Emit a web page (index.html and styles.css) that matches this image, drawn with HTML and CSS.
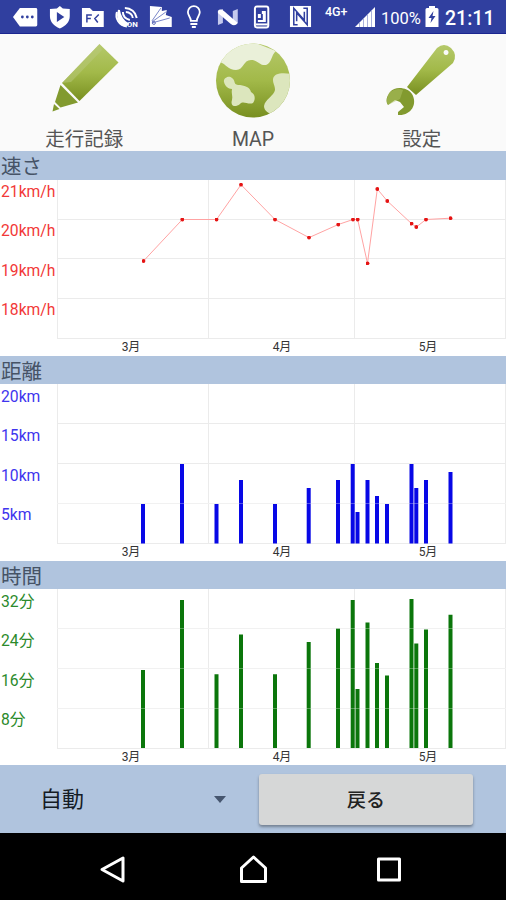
FILE: index.html
```
<!DOCTYPE html>
<html lang="ja">
<head>
    <meta charset="UTF-8">
    <meta name="viewport" content="width=device-width, initial-scale=1.0">
    <title>走行記録</title>
    <link rel="stylesheet" href="styles.css">
</head>
<body>
    <div class="status">
        <div class="notifications">
            <svg viewBox="0 0 34 34"><path fill="#fff" d="M4 17L11 8H27Q28.500 8 28.500 9.500V25Q28.500 26.500 27 26.500H11Z"/><g fill="#303f9f"><circle cx="13.500" cy="17" r="1.400"/><circle cx="18.500" cy="17" r="1.400"/><circle cx="23.500" cy="17" r="1.400"/></g></svg>
            <svg viewBox="0 0 34 34"><path fill="#fff" d="M17 6L20 8.500L27 9V16C27 22 23 26 17 28.500C11 26 7 22 7 16V9L14 8.500Z"/><path fill="#303f9f" d="M14 12L21.500 17L14 22Z"/></svg>
            <svg viewBox="0 0 34 34"><path fill="#fff" d="M6 8H14L17 11H28V27H6Z"/><path fill="none" stroke="#303f9f" stroke-width="1.500" d="M11 22.500V15H16M11 18.500H15M23 14.500L19 18.500L22 22.500"/></svg>
            <svg viewBox="0 0 34 34"><g fill="none" stroke="#fff" stroke-width="2"><path d="M7 12C5 18 9 26 17 26.500"/><path d="M9 10C10 16 13 21 18 24L15 26C9 23 7 16 9 10Z" fill="#fff"/><path d="M13 12C13 16 16 19 20 20M15 8C21 8 26 12 27 18M16 12C20 12 23 15 23 18"/></g><text x="17" y="27" class="tiny">ON</text></svg>
            <svg viewBox="0 0 34 34"><path fill="#fff" d="M6 6L18 7V11L23 10L22 15L28 17V27H6Z"/><path fill="none" stroke="#7885c8" d="M8 21L17 8M8 22L22 12M8 23L26 18"/><circle cx="10" cy="23" r="1.500" fill="none" stroke="#6572bb"/></svg>
            <svg viewBox="0 0 34 34"><path fill="none" stroke="#fff" stroke-width="1.800" d="M14 21C14 17 11 16 11 12A6 6 0 0 1 23 12C23 16 20 17 20 21Z"/><path stroke="#fff" stroke-width="2" d="M13.500 24H20.500M15 27H19"/></svg>
            <svg viewBox="0 0 34 34"><path fill="#c5caed" d="M7 11L12 9V23L7 25ZM22 11L27 9V23L22 25Z"/><path fill="#fff" d="M7 11Q9 8 13 11L27 23Q24 27 20 24L7 13Z"/></svg>
            <svg viewBox="0 0 34 34"><rect x="10" y="6.500" width="13.500" height="21" rx="2" fill="none" stroke="#fff" stroke-width="2"/><path fill="#fff" d="M13 14H16V18H13ZM17 11H21V22H13V20H18V14H17Z"/><path stroke="#fff" stroke-width="2" d="M11 24.500H23"/></svg>
        </div>
        <svg class="nfc" viewBox="0 0 24 24"><path fill="#fff" d="M1 1H23V23H1Z"/><path fill="none" stroke="#303f9f" stroke-width="1.600" d="M9 20.500H5V3.500L16 16V7M15 3.500H19V20.500L8 8V17"/></svg>
        <span class="network">4G+</span>
        <svg class="signal" viewBox="0 0 20 20"><path fill="#fff" d="M0 20L20 0V20Z"/><path stroke="#a9b1dc" d="M4.500 16V20M8.500 12V20M12.500 8V20M16.500 4V20"/></svg>
        <span class="percent">100%</span>
        <svg class="battery" viewBox="0 0 14 21"><path fill="#fff" d="M4 0H10V2H12Q13.500 2 13.500 3.500V21H.500V3.500Q.500 2 2 2H4Z"/><path fill="#303f9f" d="M8.500 5L3.500 12H6.500L5.500 17L10.500 10H7.500Z"/></svg>
        <span class="clock">21:11</span>
    </div>

    <div class="menu">
        <div class="menu-item">
            <svg width="76" height="76" viewBox="0 0 76 76">
                <defs><linearGradient id="green" x1="0" y1="0" x2="0" y2="1"><stop offset="0" stop-color="#b5c96a"/><stop offset=".5" stop-color="#a2b949"/><stop offset="1" stop-color="#788f20"/></linearGradient></defs>
                <path fill="url(#green)" d="M53.500 2L72.500 20.500L33.500 59L16 41Z"/>
                <path fill="#829a2f" d="M14.500 43L32 60.500L14.500 65.500L9 60ZM8 62L13.500 67L6.500 69.500Z"/>
                <path fill="#b9ca7e" opacity=".5" d="M53.500 2L56 8L25 40L16 41Z"/>
            </svg>
            <span>走行記録</span>
        </div>
        <div class="menu-item">
            <svg width="76" height="76" viewBox="0 0 76 76">
                <defs><clipPath id="globe"><circle cx="38" cy="38.500" r="37"/></clipPath></defs>
                <circle cx="38" cy="38.500" r="37" fill="url(#green)"/>
                <g clip-path="url(#globe)" fill="#dce6bd">
                    <path fill="#eaf0d9" d="M5 20C11 22 13 28 21 28C29 28 28 18 36 18C43 18 45 24 51 23C57 21 56 13 61 9L38 0H12Z"/>
                    <path d="M9 40C8 36 14 33 17 36C21 39 18 42 23 43C29 43 35 45 36 50C40 52 41 57 38 61C33 63 28 58 25 62C20 66 15 64 17 58C18 54 16 51 17 47C13 47 10 44 9 40Z"/>
                    <path d="M76 32C70 31 58 30 58 38C58 42 60 43 60 48C59 54 50 57 49 64C49 69 54 72 60 73L76 60Z"/>
                </g>
            </svg>
            <span>MAP</span>
        </div>
        <div class="menu-item">
            <svg width="76" height="76" viewBox="0 0 76 76">
                <path fill="url(#green)" fill-rule="evenodd" d="M53 6Q60 0 67 6Q74 13 69 21L32 53L23 45ZM62 8A2.500 2.500 0 1 0 62.100 8Z"/>
                <path fill="#829a2f" d="M6 50C11 44 23 45 28 52C34 62 27 74 14 73L14 70L20 65L16 60L11 58L4 63C1 59 3 54 6 50Z"/>
                <path fill="#afc465" opacity=".5" d="M6 50Q13 45 19 48L16 57L4 63Q1 57 6 50Z"/>
            </svg>
            <span>設定</span>
        </div>
    </div>

    <h2 class="first">速さ</h2>
    <div class="chart speed">
        <div class="labels"><span>21km/h</span><span>20km/h</span><span>19km/h</span><span>18km/h</span></div>
        <svg class="plot" viewBox="57 0 449 176">
            <defs><marker id="dot" markerWidth="4" markerHeight="4" refX="2" refY="2" markerUnits="userSpaceOnUse"><circle cx="2" cy="2" r="1.900" fill="#e51414"/></marker></defs>
            <path class="grid" d="M57 39.500H506M57 78.500H506M57 118.500H506M57 158.500H506M57.500 0V159M208.500 0V159M354.500 0V159M505.500 0V159"/>
            <polyline class="line" points="143.500,81 182.300,39.500 216.500,39.500 241,4.700 275,39.500 309,57.600 338.300,44.500 353,39.500 357.700,39.500 367.500,83.300 377.300,9 387.300,21 411.500,43.600 416.300,47 426,39.500 450.500,38.200"/>
            <text x="131" y="171">3月</text><text x="282" y="171">4月</text><text x="428" y="171">5月</text>
        </svg>
    </div>

    <h2>距離</h2>
    <div class="chart distance">
        <div class="labels"><span>20km</span><span>15km</span><span>10km</span><span>5km</span></div>
        <svg class="plot" viewBox="57 0 449 176">
            <path class="grid" d="M57 39.500H506M57 79.500H506M57 119.500H506M57 159.500H506M57.500 0V159M208.500 0V159M354.500 0V159M505.500 0V159"/>
            <path class="bars" d="M143 159.500V120M182 159.500V80M216.500 159.500V120M241 159.500V96M275 159.500V120M308.700 159.500V104M338 159.500V96M352.700 159.500V80M357.500 159.500V128M367.500 159.500V96M377 159.500V112M387 159.500V120M411.500 159.500V80M416.300 159.500V104M426 159.500V96M450.500 159.500V88"/>
            <path class="grid over" d="M57 119.500H506"/>
            <text x="131" y="172">3月</text><text x="282" y="172">4月</text><text x="428" y="172">5月</text>
        </svg>
    </div>

    <h2>時間</h2>
    <div class="chart time">
        <div class="labels"><span>32分</span><span>24分</span><span>16分</span><span>8分</span></div>
        <svg class="plot" viewBox="57 0 449 176">
            <path class="grid" d="M57 39.500H506M57 79.500H506M57 119.500H506M57 159.500H506M57.500 0V159M208.500 0V159M354.500 0V159M505.500 0V159"/>
            <path class="bars" d="M143 159V81M182 159V11M216.500 159V85.300M241 159V45.500M275 159V85.300M308.700 159V53M338 159V39.500M352.700 159V11M357.500 159V100M367.500 159V33.500M377 159V74M387 159V86.500M411.500 159V10M416.300 159V54.500M426 159V40.500M450.500 159V25.700"/>
            <path class="grid over" d="M57 39.500H506M57 79.500H506M57 119.500H506"/>
            <text x="131" y="171.500">3月</text><text x="282" y="171.500">4月</text><text x="428" y="171.500">5月</text>
        </svg>
    </div>

    <div class="footer">
        <div class="select"><span>自動</span><span class="arrow"></span></div>
        <button class="back">戻る</button>
    </div>

    <div class="navbar">
        <svg width="28" height="30" viewBox="0 0 28 30"><path d="M24 3V26L3 14.500Z"/></svg>
        <svg width="32" height="30" viewBox="0 0 32 30"><path d="M6.500 26.500V13L18.500 2L30.500 13V26.500Z"/></svg>
        <svg width="28" height="30" viewBox="0 0 28 30"><path d="M3.500 4H24.500V25H3.500Z"/></svg>
    </div>
</body>
</html>
```
FILE: styles.css
```
* {
    box-sizing: border-box;
}
body {
    margin: 0;
    width: 506px;
    height: 900px;
    overflow: hidden;
    display: flex;
    flex-direction: column;
    background-color: #fafafa;
    font-family: Roboto, "Noto Sans CJK JP", sans-serif;
}
.status {
    display: flex;
    align-items: center;
    height: 34px;
    padding-left: 9px;
    background-color: #303f9f;
    border-bottom: 1px solid #1b2690;
    color: #fff;
}
.notifications {
    display: flex;
    width: 270px;
}
.notifications svg {
    width: 33.7px;
    height: 34px;
}
.tiny {
    font-size: 8px;
    font-weight: bold;
    fill: #fff;
}
.nfc {
    width: 23px;
    height: 23px;
    margin-left: 10px;
}
.network {
    width: 24px;
    margin: 0 6px 9px 13px;
    font-size: 12.5px;
    font-weight: 500;
    line-height: 14px;
}
.signal {
    width: 20px;
    height: 20px;
}
.percent {
    width: 40px;
    margin: 3px 4px 0 6px;
    font-size: 16.5px;
}
.battery {
    width: 14px;
    height: 21px;
}
.clock {
    margin: 3px 0 0 6px;
    font-size: 19.5px;
    font-weight: 500;
}
.menu {
    display: flex;
    height: 117px;
}
.menu-item {
    flex: 1;
    display: flex;
    flex-direction: column;
    align-items: center;
    padding-top: 8px;
    color: #555;
    font-size: 19.5px;
    line-height: 22px;
}
.menu-item svg {
    flex: none;
}
.menu-item span {
    margin-top: 11px;
}
h2 {
    flex: none;
    margin: 0;
    height: 28px;
    padding: 2px 0 0 1px;
    background-color: #b0c4de;
    color: #465366;
    font-size: 20.5px;
    font-weight: normal;
    line-height: 28px;
}
.first {
    height: 29px;
}
.chart {
    display: flex;
    height: 176px;
    background-color: #fff;
}
.labels {
    display: flex;
    flex-direction: column;
    gap: 19.4px;
    width: 57px;
    padding: 2px 0 0 1px;
    font-size: 15.7px;
    line-height: 20px;
}
.plot {
    width: 449px;
    height: 176px;
}
.plot text {
    fill: #333;
    font-size: 12px;
    text-anchor: middle;
}
.grid {
    fill: none;
    stroke: #ebebeb;
}
.over {
    stroke: #fff;
    opacity: 0.3;
}
.line {
    fill: none;
    stroke: #ffa3a3;
    marker: url(#dot);
}
.bars {
    stroke-width: 4;
}
.speed {
    color: #f23838;
}
.distance {
    height: 177px;
    color: #4035ee;
}
.distance .labels,
.time .labels {
    padding-top: 3px;
}
.distance .bars {
    stroke: #0808e6;
}
.time {
    color: #2b8a2b;
}
.time .bars {
    stroke: #0b760b;
}
.footer {
    display: flex;
    height: 68px;
    padding: 9px 33px 8px 40px;
    background-color: #b0c4de;
}
.select {
    display: flex;
    align-items: center;
    justify-content: space-between;
    width: 219px;
    padding-right: 33px;
    color: #151c25;
    font-size: 22px;
    line-height: 30px;
}
.arrow {
    border: 6px solid transparent;
    border-top: 7px solid #46566f;
    border-bottom: 0;
}
.back {
    flex: 1;
    border: 0;
    border-radius: 3px;
    padding: 0 0 2px;
    background-color: #d6d7d7;
    box-shadow: 0 2px 3px rgba(0, 0, 0, 0.35);
    color: #222;
    font-family: inherit;
    font-size: 19px;
    font-weight: 500;
}
.navbar {
    display: flex;
    align-items: center;
    justify-content: space-between;
    height: 67px;
    padding: 6px 103px 0 99px;
    background-color: #000;
}
.navbar path {
    fill: none;
    stroke: #fff;
    stroke-width: 3;
    stroke-linejoin: round;
}
```
